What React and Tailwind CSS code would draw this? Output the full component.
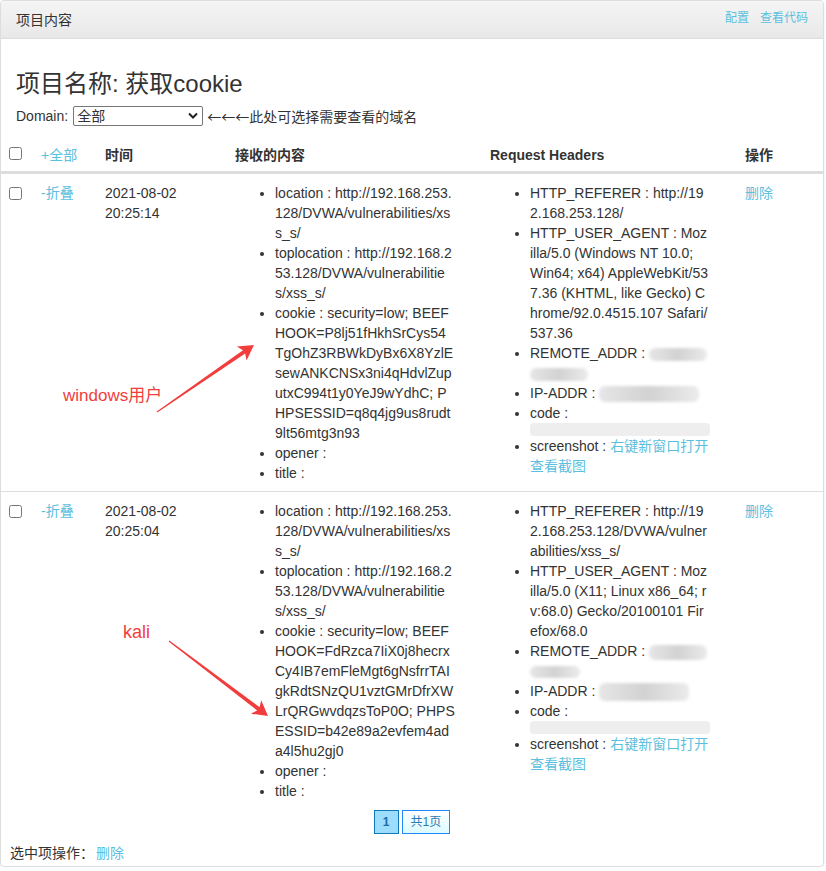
import React from "react";

const link = "text-[#5bc0de]";

const rows = [
  {
    date: ["2021-08-02", "20:25:14"],
    content: [
      ["location : http://192.168.253.", "128/DVWA/vulnerabilities/xs", "s_s/"],
      ["toplocation : http://192.168.2", "53.128/DVWA/vulnerabilitie", "s/xss_s/"],
      [
        "cookie : security=low; BEEF",
        "HOOK=P8lj51fHkhSrCys54",
        "TgOhZ3RBWkDyBx6X8YzlE",
        "sewANKCNSx3ni4qHdvlZup",
        "utxC994t1y0YeJ9wYdhC; P",
        "HPSESSID=q8q4jg9us8rudt",
        "9lt56mtg3n93",
      ],
      ["opener :"],
      ["title :"],
    ],
    referer: ["HTTP_REFERER : http://19", "2.168.253.128/"],
    agent: [
      "HTTP_USER_AGENT : Moz",
      "illa/5.0 (Windows NT 10.0;",
      "Win64; x64) AppleWebKit/53",
      "7.36 (KHTML, like Gecko) C",
      "hrome/92.0.4515.107 Safari/",
      "537.36",
    ],
    remote: [[58, 13], [58, 13]],
    ip: [100, 16],
  },
  {
    date: ["2021-08-02", "20:25:04"],
    content: [
      ["location : http://192.168.253.", "128/DVWA/vulnerabilities/xs", "s_s/"],
      ["toplocation : http://192.168.2", "53.128/DVWA/vulnerabilitie", "s/xss_s/"],
      [
        "cookie : security=low; BEEF",
        "HOOK=FdRzca7IiX0j8hecrx",
        "Cy4IB7emFleMgt6gNsfrrTAI",
        "gkRdtSNzQU1vztGMrDfrXW",
        "LrQRGwvdqzsToP0O; PHPS",
        "ESSID=b42e89a2evfem4ad",
        "a4l5hu2gj0",
      ],
      ["opener :"],
      ["title :"],
    ],
    referer: ["HTTP_REFERER : http://19", "2.168.253.128/DVWA/vulner", "abilities/xss_s/"],
    agent: [
      "HTTP_USER_AGENT : Moz",
      "illa/5.0 (X11; Linux x86_64; r",
      "v:68.0) Gecko/20100101 Fir",
      "efox/68.0",
    ],
    remote: [[58, 15], [50, 12]],
    ip: [90, 18],
  },
];

function Lines({ lines }) {
  return lines.map((l, i) => (
    <span key={i} className="block whitespace-nowrap">{l}</span>
  ));
}

function Blur({ size }) {
  return (
    <span
      className="inline-block align-middle rounded-[6px] bg-gradient-to-r from-[#e6e6e6] via-[#d2d2d2] to-[#ebebeb] blur-[1.5px]"
      style={{ width: size[0], height: size[1] }}
    />
  );
}

function Arrow({ points }) {
  return (
    <svg className="absolute left-0 top-0 w-[300px] h-[260px] pointer-events-none overflow-visible" viewBox="0 0 300 260">
      <polygon points={points} fill="#f23d3d" />
    </svg>
  );
}

function Row({ row, idx }) {
  return (
    <div className="relative grid grid-cols-[32px_64px_130px_255px_255px_86px] border-t border-[#ddd]">
      <div className="px-2 pt-[9px] pb-2">
        <input type="checkbox" className="block mt-1" />
      </div>
      <div className="px-2 pt-[9px] pb-2">
        <span className={link}>-折叠</span>
      </div>
      <div className="px-2 pt-[9px] pb-2">
        <Lines lines={row.date} />
      </div>
      <div className="px-2 pt-[9px] pb-2">
        <ul className="list-disc pl-10">
          {row.content.map((c, i) => (
            <li key={i}><Lines lines={c} /></li>
          ))}
        </ul>
      </div>
      <div className="px-2 pt-[9px] pb-2">
        <ul className="list-disc pl-10">
          <li><Lines lines={row.referer} /></li>
          <li><Lines lines={row.agent} /></li>
          <li>
            <span className="block whitespace-nowrap">REMOTE_ADDR : <Blur size={row.remote[0]} /></span>
            <span className="block h-5"><Blur size={row.remote[1]} /></span>
          </li>
          <li className="whitespace-nowrap">IP-ADDR : <Blur size={row.ip} /></li>
          <li>
            code :
            <span className="block h-[13px] w-[180px] rounded-[4px] bg-[#eeeeee]" />
          </li>
          <li>
            <span className="block whitespace-nowrap">
              screenshot : <span className={link}>右键新窗口打开</span>
            </span>
            <span className={`block ${link}`}>查看截图</span>
          </li>
        </ul>
      </div>
      <div className="px-2 pt-[9px] pb-2">
        <span className={link}>删除</span>
      </div>

      {idx === 0 ? (
        <>
          <Arrow points="156.3,238.5 244.2,179.4 245.5,186.5 253,171 235.8,172.5 242,176.2 155.7,237.5" />
          <span className="absolute left-[62px] top-[212px] text-[17px] leading-5 text-[#f23d3d] whitespace-nowrap">windows用户</span>
        </>
      ) : (
        <>
          <Arrow points="167.6,149.5 256.2,218.4 249.9,221.7 267,224 260.2,208.2 258.6,215.2 168.4,148.5" />
          <span className="absolute left-[122px] top-[130px] text-[18px] leading-5 text-[#f23d3d]">kali</span>
        </>
      )}
    </div>
  );
}

export default function App() {
  return (
    <div className="w-[826px] bg-white text-[#333] text-[14px] leading-5 font-['Liberation_Sans','Noto_Sans_CJK_SC',sans-serif]">
      <div className="w-[824px] border border-[#ddd] rounded-[4px] shadow-[0_1px_2px_rgba(0,0,0,0.08)] overflow-hidden">
        <div className="h-[38px] flex items-center justify-between px-[15px] border-b border-[#ddd] bg-gradient-to-b from-[#f5f5f5] to-[#e8e8e8]">
          <span>项目内容</span>
          <div className="flex gap-[11px] text-[12px] -mt-[3px]">
            <span className={link}>配置</span>
            <span className={link}>查看代码</span>
          </div>
        </div>

        <h3 className="px-[15px] mt-[32px] text-[24px] leading-[26px] font-normal">项目名称: 获取cookie</h3>

        <div className="px-[15px] mt-[9px] h-5 flex items-center">
          <span>Domain:</span>
          <div className="relative ml-[5px]">
            <select className="block appearance-none w-[130px] h-5 border border-[#767676] rounded-[2px] pl-[3px] text-[14px] leading-[18px] bg-white">
              <option>全部</option>
            </select>
            <svg className="absolute right-[5px] top-[6px] w-[10px] h-[8px] pointer-events-none" viewBox="0 0 10 8">
              <path d="M1 1.5 L5 5.5 L9 1.5" fill="none" stroke="#222" strokeWidth="2" />
            </svg>
          </div>
          <span className="ml-[4px]">
            <span className="font-['Noto_Sans_CJK_SC',sans-serif]">←←←</span>此处可选择需要查看的域名
          </span>
        </div>

        <div className="mt-[10px]">
          <div className="grid grid-cols-[32px_64px_130px_255px_255px_86px] border-b-2 border-[#ddd] font-bold">
            <div className="px-2 pt-[9px] pb-[6px]">
              <input type="checkbox" className="block mt-[2px]" />
            </div>
            <div className="px-2 pt-[9px] pb-[6px] font-normal">
              <span className={link}>+全部</span>
            </div>
            <div className="px-2 pt-[9px] pb-[6px]">时间</div>
            <div className="px-2 pt-[9px] pb-[6px]">接收的内容</div>
            <div className="px-2 pt-[9px] pb-[6px]">Request Headers</div>
            <div className="px-2 pt-[9px] pb-[6px]">操作</div>
          </div>
          {rows.map((r, i) => (
            <Row key={i} row={r} idx={i} />
          ))}
        </div>

        <div className="flex justify-center gap-[3px] mt-[1px] text-[12px]">
          <span className="h-6 px-2 border border-[#0f78b8] bg-[#9cdcfc] text-[#1d6ea6] font-bold leading-[22px]">1</span>
          <span className="h-6 px-2 border border-[#2088ff] bg-gradient-to-b from-white to-[#dcfbff] text-[#2b7bb3] leading-[22px]">共1页</span>
        </div>

        <div className="mt-[9px] pl-[9px] pb-[3px]">
          选中项操作：<span className={`${link} ml-[2px]`}>删除</span>
        </div>
      </div>
    </div>
  );
}
